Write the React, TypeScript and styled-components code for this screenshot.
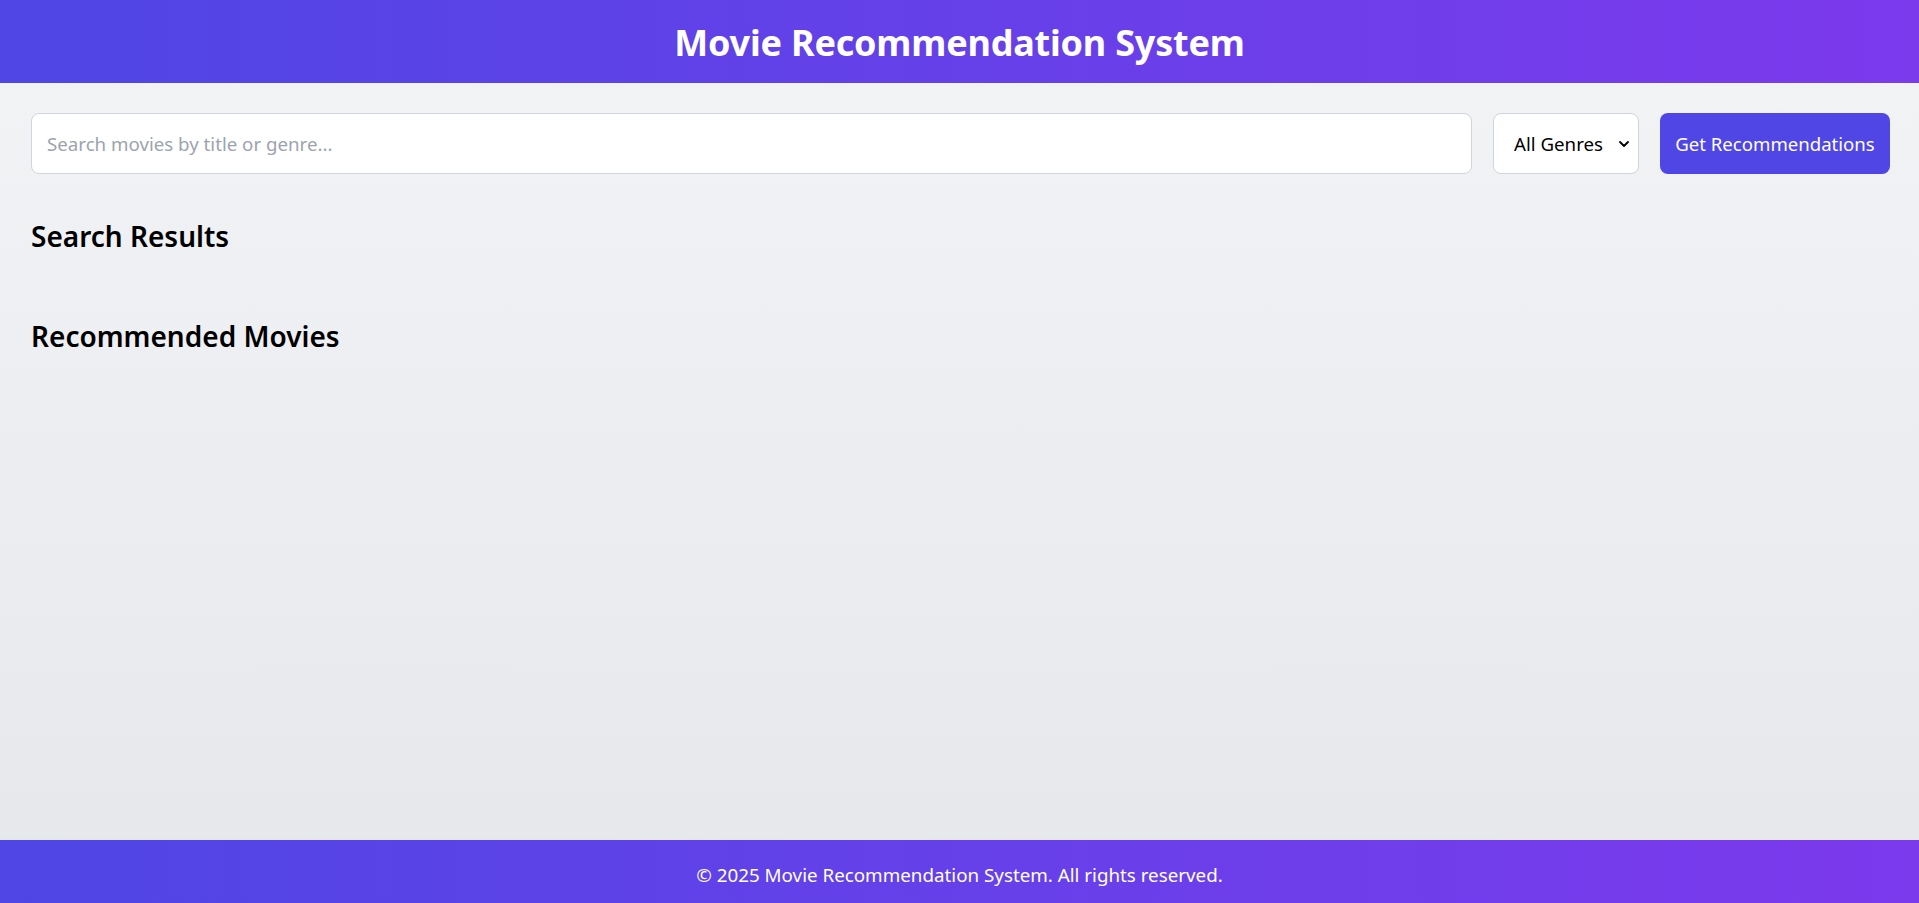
import * as React from 'react';
import styled, { createGlobalStyle } from 'styled-components';

const GlobalStyle = createGlobalStyle`
  html, body {
    margin: 0;
    padding: 0;
  }
  body {
    font-family: "Noto Sans", "Open Sans", sans-serif;
    color: #000;
  }
  * {
    box-sizing: border-box;
  }
`;

const Page = styled.div`
  min-height: 100vh;
  display: flex;
  flex-direction: column;
  background: linear-gradient(180deg, #f3f4f6 0%, #e5e7eb 100%);
`;

const Header = styled.header`
  height: 83px;
  display: flex;
  align-items: center;
  justify-content: center;
  padding-top: 2px;
  background: linear-gradient(90deg, #4f46e5 0%, #7c3aed 100%);
`;

const Title = styled.h1`
  margin: 0;
  color: #fff;
  font-size: 36px;
  font-weight: 700;
  letter-spacing: -0.2px;
`;

const Main = styled.main`
  flex: 1;
  padding: 30px 29px 30px 31px;
`;

const SearchBar = styled.div`
  display: flex;
  gap: 21px;
  height: 61px;
`;

const SearchInput = styled.input`
  flex: 1;
  height: 100%;
  padding: 0 15px;
  border: 1px solid #d1d5db;
  border-radius: 8px;
  background: #fff;
  font-family: inherit;
  font-size: 18.7px;
  outline: none;

  &::placeholder {
    color: #9ca3af;
  }
`;

const SelectWrap = styled.div`
  position: relative;
  width: 146px;
  height: 100%;
`;

const GenreSelect = styled.select`
  appearance: none;
  width: 100%;
  height: 100%;
  padding: 0 30px 0 20px;
  border: 1px solid #d1d5db;
  border-radius: 8px;
  background: #fff;
  font-family: inherit;
  font-size: 18.7px;
  color: #000;
  outline: none;
`;

const Chevron = styled.svg`
  position: absolute;
  right: 9px;
  top: 50%;
  transform: translateY(-50%);
  pointer-events: none;
`;

const PrimaryButton = styled.button`
  width: 230px;
  height: 100%;
  border: none;
  border-radius: 8px;
  background: #4f46e5;
  color: #fff;
  font-family: inherit;
  font-size: 18.6px;
  cursor: pointer;
`;

const Section = styled.section`
  margin-top: 45px;

  & + & {
    margin-top: 66px;
  }
`;

const SectionTitle = styled.h2`
  margin: 0;
  font-size: 28px;
  line-height: 34px;
  font-weight: 600;
`;

const Footer = styled.footer`
  height: 63px;
  display: flex;
  align-items: center;
  justify-content: center;
  padding-top: 7px;
  background: linear-gradient(90deg, #4f46e5 0%, #7c3aed 100%);
  color: #fff;
  font-size: 18.8px;
`;

const App = () => (
  <>
    <GlobalStyle />
    <Page>
      <Header>
        <Title>Movie Recommendation System</Title>
      </Header>
      <Main>
        <SearchBar>
          <SearchInput placeholder="Search movies by title or genre..." />
          <SelectWrap>
            <GenreSelect defaultValue="">
              <option value="">All Genres</option>
              <option value="action">Action</option>
              <option value="comedy">Comedy</option>
              <option value="drama">Drama</option>
            </GenreSelect>
            <Chevron width="12" height="12" viewBox="0 0 12 12">
              <path d="M2 4l4 4 4-4" fill="none" stroke="#000" strokeWidth="1.8" strokeLinecap="round" strokeLinejoin="round" />
            </Chevron>
          </SelectWrap>
          <PrimaryButton>Get Recommendations</PrimaryButton>
        </SearchBar>
        <Section>
          <SectionTitle>Search Results</SectionTitle>
        </Section>
        <Section>
          <SectionTitle>Recommended Movies</SectionTitle>
        </Section>
      </Main>
      <Footer>© 2025 Movie Recommendation System. All rights reserved.</Footer>
    </Page>
  </>
);

export default App;
